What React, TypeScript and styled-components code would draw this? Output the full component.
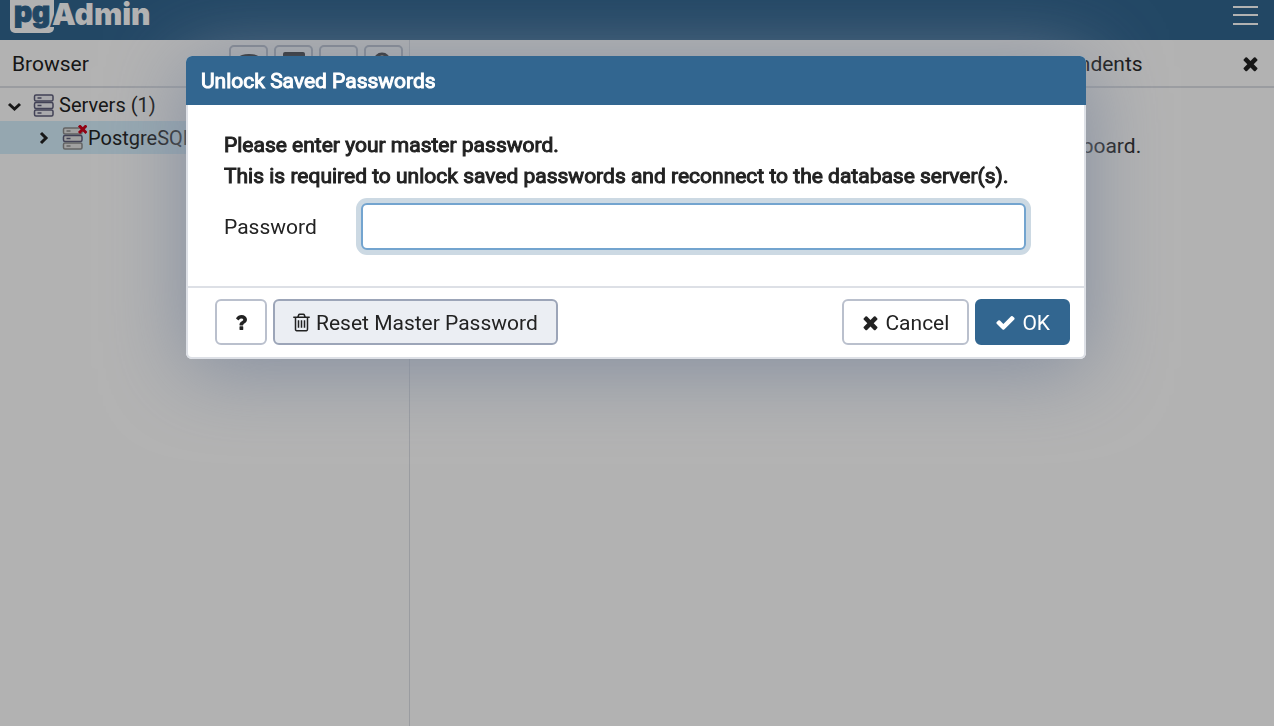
import React from "react";
import styled, { createGlobalStyle, css } from "styled-components";

const Global = createGlobalStyle`
  *, *::before, *::after { box-sizing: border-box; }
  html, body, #root { height: 100%; }
  body {
    margin: 0;
    overflow: hidden;
    background: #fff;
    color: #222;
    font: 400 21px/32px Roboto, "Liberation Sans", sans-serif;
  }
  button, input { font: inherit; color: inherit; }
`;

const Page = styled.div`
  display: flex;
  flex-direction: column;
  height: 100%;
`;

const NavBar = styled.header`
  display: flex;
  justify-content: space-between;
  align-items: flex-start;
  height: 40px;
  flex: none;
  padding: 0 15px 0 10px;
  background: #326690;
`;

const MenuButton = styled.button`
  display: flex;
  padding: 4px 0 0;
  border: 0;
  background: none;
  color: #fff;
`;

const Workspace = styled.div`
  display: flex;
  flex: 1;
  min-height: 0;
`;

const Sidebar = styled.aside`
  width: 410px;
  flex: none;
  border-right: 1px solid #dde0e6;
`;

const PanelHeader = styled.div`
  display: flex;
  align-items: center;
  height: 48px;
  padding: 2px 6px 0 12px;
  border-bottom: 2px solid #dde0e6;
`;

const PanelTitle = styled.span`
  flex: 1;
`;

const ToolGroup = styled.div`
  display: flex;
  gap: 6px;
`;

const ToolButton = styled.button`
  display: flex;
  align-items: center;
  justify-content: center;
  width: 39px;
  height: 38px;
  padding: 0;
  border: 2px solid #bac0cd;
  border-radius: 5px;
  background: #fff;
`;

const Tree = styled.ul`
  list-style: none;
  margin: 0;
  padding: 0;
  font-size: 20px;
`;

const TreeRow = styled.li<{ $level: number; $selected?: boolean }>`
  display: flex;
  align-items: center;
  height: 33px;
  padding-left: ${(p) => 6 + p.$level * 29}px;
  white-space: nowrap;
  background: ${(p) => (p.$selected ? "#d6effc" : "transparent")};
`;

const TreeIcon = styled.svg`
  flex: none;
  margin: 0 1px 0 11px;
`;

const Main = styled.main`
  flex: 1;
  min-width: 0;
`;

const TabBar = styled.nav`
  display: flex;
  align-items: center;
  gap: 29px;
  height: 48px;
  padding: 2px 15px 0 20px;
  border-bottom: 2px solid #dde0e6;
`;

const Tab = styled.a`
  color: inherit;
  text-decoration: none;
`;

const CloseButton = styled.button`
  display: flex;
  margin-left: auto;
  padding: 0 0 2px;
  border: 0;
  background: none;
`;

const EmptyMessage = styled.p`
  display: flex;
  align-items: center;
  justify-content: center;
  gap: 12px;
  margin: 42px 0 0;
`;

const Backdrop = styled.div`
  position: fixed;
  inset: 0;
  background: rgba(0, 0, 0, 0.3);
`;

const Dialog = styled.section`
  position: fixed;
  top: 56px;
  left: 186px;
  width: 900px;
  border-radius: 6px;
  background: #fff;
  box-shadow: 0 10px 80px #848ea0;
`;

const DialogHeader = styled.h1`
  margin: 0;
  padding: 9px 15px 8px;
  border-radius: 6px 6px 0 0;
  background: #326690;
  color: #fff;
  font-size: 21px;
  line-height: 32px;
  font-weight: 400;
  -webkit-text-stroke: 1px #fff;
`;

const DialogBody = styled.div`
  padding: 25px 58px 32px 36px;
  border: 2px solid #dde0e6;
  border-width: 0 2px 2px;
`;

const Prompt = styled.p`
  margin: 0;
  line-height: 31px;
  white-space: nowrap;
  -webkit-text-stroke: 1px #222;
`;

const Field = styled.div`
  display: grid;
  grid-template-columns: 137px 1fr;
  align-items: center;
  margin: 11px 0 4px;
`;

const PasswordInput = styled.input`
  width: 100%;
  height: 47px;
  padding: 0 12px;
  border: 2px solid #73a4cf;
  border-radius: 6px;
  outline: none;
  box-shadow: 0 0 0 5px #ccd9e3;
`;

const DialogFooter = styled.footer`
  display: flex;
  gap: 6px;
  padding: 11px 14px 12px 27px;
  border: 2px solid #dde0e6;
  border-width: 0 2px 2px;
  border-radius: 0 0 6px 6px;
`;

const Spacer = styled.div`
  flex: 1;
`;

const variants = {
  plain: css`
    border-color: #bac0cd;
    background: #fff;
  `,
  muted: css`
    border-color: #9ca5b8;
    background: #ebeef3;
  `,
  primary: css`
    border-color: #326690;
    background: #326690;
    color: #fff;
  `,
};

const Button = styled.button<{ $variant?: keyof typeof variants }>`
  display: flex;
  align-items: center;
  gap: 6px;
  height: 46px;
  padding: 0 18px;
  border: 2px solid;
  border-radius: 6px;
  white-space: nowrap;
  ${(p) => variants[p.$variant ?? "plain"]}
`;

const ButtonLabel = styled.span`
  padding-top: 2px;
`;

const ICONS = {
  times: {
    width: 17,
    box: "192 0 1408 1792",
    d: "M1490 1322q0 40-28 68l-136 136q-28 28-68 28t-68-28l-294-294-294 294q-28 28-68 28t-68-28l-136-136q-28-28-28-68t28-68l294-294-294-294q-28-28-28-68t28-68l136-136q28-28 68-28t68 28l294 294 294-294q28-28 68-28t68 28l136 136q28 28 28 68t-28 68l-294 294 294 294q28 28 28 68z",
  },
  check: {
    width: 21,
    box: "0 0 1792 1792",
    d: "M1671 566q0 40-28 68l-724 724-136 136q-28 28-68 28t-68-28l-136-136-362-362q-28-28-28-68t28-68l136-136q28-28 68-28t68 28l294 295 656-657q28-28 68-28t68 28l136 136q28 28 28 68z",
  },
  question: {
    width: 12,
    box: "384 0 1024 1792",
    d: "M1088 1256v240q0 16-12 28t-28 12h-240q-16 0-28-12t-12-28v-240q0-16 12-28t28-12h240q16 0 28 12t12 28zm316-600q0 54-15.5 101t-35 76.5-55 59.5-57.5 43.5-61 35.5q-41 23-68.5 65t-27.5 67q0 17-12 32.5t-28 15.5h-240q-15 0-25.5-18.5t-10.5-37.5v-45q0-83 65-156.5t143-108.5q59-27 84-56t25-76q0-42-46.5-74t-107.5-32q-65 0-108 29-35 25-107 115-13 16-31 16-12 0-25-8l-164-125q-13-10-15.5-25t5.5-28q160-266 464-266 80 0 161 31t146 83 106 127.5 41 158.5z",
  },
  trash: {
    width: 17,
    box: "192 0 1408 1792",
    d: "M704 736v576q0 14-9 23t-23 9h-64q-14 0-23-9t-9-23v-576q0-14 9-23t23-9h64q14 0 23 9t9 23zm256 0v576q0 14-9 23t-23 9h-64q-14 0-23-9t-9-23v-576q0-14 9-23t23-9h64q14 0 23 9t9 23zm256 0v576q0 14-9 23t-23 9h-64q-14 0-23-9t-9-23v-576q0-14 9-23t23-9h64q14 0 23 9t9 23zm128 724v-948h-896v948q0 22 7 40.5t14.5 27 10.5 8.5h832q3 0 10.5-8.5t14.5-27 7-40.5zm-672-1076h448l-48-117q-7-9-17-11h-317q-10 2-17 11zm928 32v64q0 14-9 23t-23 9h-96v948q0 83-47 143.5t-113 60.5h-832q-66 0-113-58.5t-47-141.5v-952h-96q-14 0-23-9t-9-23v-64q0-14 9-23t23-9h309l70-167q15-37 54-63t79-26h320q40 0 79 26t54 63l70 167h309q14 0 23 9t9 23z",
  },
};

const Icon = ({ name }: { name: keyof typeof ICONS }) => (
  <svg width={ICONS[name].width} height="21" viewBox={ICONS[name].box} fill="currentColor" aria-hidden="true">
    <path d={ICONS[name].d} />
  </svg>
);

const LogoArt = styled.svg`
  overflow: visible;

  text {
    font-family: Inter, sans-serif;
    font-weight: 900;
  }
`;

const Logo = () => (
  <LogoArt width="146" height="36" viewBox="0 0 146 36" role="img" aria-label="pgAdmin">
    <rect y="-8" width="44" height="41" rx="5" fill="#fff" />
    <text x="4" y="22" fontSize="28" fill="#326690" stroke="#326690">pg</text>
    <text x="42" y="25" fontSize="30" fill="#fff" stroke="#326690" strokeWidth="4" paintOrder="stroke">Admin</text>
  </LogoArt>
);

const Chevron = ({ open }: { open?: boolean }) => (
  <svg width="16" height="16" viewBox="0 0 16 16" fill="none" stroke="#222" strokeWidth="3" aria-hidden="true">
    <path d={open ? "M3 7L8.500 12L14 7" : "M6 3L11 8L6 13"} />
  </svg>
);

const ServerIcon = ({ offline }: { offline?: boolean }) => (
  <TreeIcon width="25" height="26" viewBox="0 0 25 26" fill="none" strokeWidth="1.500" aria-hidden="true">
    {[3, 10.5, 18].map((y, i) => (
      <g key={y} stroke={offline && i !== 1 ? "#8f8f8f" : "#5f5f7c"}>
        <rect x="1.500" y={y} width="18.500" height="6" rx="1.500" fill={offline ? "#e6e6e6" : "#f2f2f6"} />
        <path d="M4.500 3H8.500" transform={`translate(0 ${y})`} />
      </g>
    ))}
    {offline && <path d="M17 0.500L24.500 8M24.500 0.500L17 8" stroke="#d0021b" strokeWidth="3" />}
  </TreeIcon>
);

const tabs = ["Dashboard", "Properties", "SQL", "Statistics", "Dependencies", "Dependents"];

export default function App() {
  return (
    <>
      <Global />
      <Page>
        <NavBar>
          <Logo />
          <MenuButton aria-label="Menu">
            <svg width="27" height="24" viewBox="0 0 27 24" stroke="currentColor" strokeWidth="2">
              <path d="M1 3H26M1 11H26M1 20H26" />
            </svg>
          </MenuButton>
        </NavBar>
        <Workspace>
          <Sidebar>
            <PanelHeader>
              <PanelTitle>Browser</PanelTitle>
              <ToolGroup>
                <ToolButton aria-label="Query tool">
                  <svg width="20" height="22" viewBox="0 0 20 22" fill="#222"><ellipse cx="10" cy="4" rx="10" ry="3" /><path d="M1 6Q10 11 19 6V16Q10 21 1 16Z" /></svg>
                </ToolButton>
                <ToolButton aria-label="View data">
                  <svg width="22" height="24" viewBox="0 0 22 24" fill="#222"><rect width="22" height="22" rx="2" /></svg>
                </ToolButton>
                <ToolButton aria-label="Filtered rows" />
                <ToolButton aria-label="Search objects">
                  <svg width="20" height="24" viewBox="0 0 20 24" fill="none" stroke="#222" strokeWidth="3"><circle cx="8" cy="9" r="7" /><path d="M13 14L18 19" /></svg>
                </ToolButton>
              </ToolGroup>
            </PanelHeader>
            <Tree>
              <TreeRow $level={0}><Chevron open /><ServerIcon />Servers (1)</TreeRow>
              <TreeRow $level={1} $selected><Chevron /><ServerIcon offline />PostgreSQL 13</TreeRow>
            </Tree>
          </Sidebar>
          <Main>
            <TabBar>
              {tabs.map((t) => <Tab key={t} href="#">{t}</Tab>)}
              <CloseButton aria-label="Close panel"><Icon name="times" /></CloseButton>
            </TabBar>
            <EmptyMessage>
              <svg width="21" height="21" viewBox="0 0 21 21" aria-hidden="true">
                <circle cx="10" cy="10" r="9" fill="#222" />
                <path d="M10 4V12M10 14V17" stroke="#fff" strokeWidth="3" />
              </svg>
              Please connect to the selected server to view the dashboard.
            </EmptyMessage>
          </Main>
        </Workspace>
      </Page>
      <Backdrop />
      <Dialog role="dialog" aria-labelledby="dialog-title">
        <DialogHeader id="dialog-title">Unlock Saved Passwords</DialogHeader>
        <DialogBody>
          <Prompt>
            Please enter your master password.
            <br />
            This is required to unlock saved passwords and reconnect to the database server(s).
          </Prompt>
          <Field>
            <label htmlFor="password">Password</label>
            <PasswordInput id="password" type="password" />
          </Field>
        </DialogBody>
        <DialogFooter>
          <Button aria-label="Help"><Icon name="question" /></Button>
          <Button $variant="muted"><Icon name="trash" /><ButtonLabel>Reset Master Password</ButtonLabel></Button>
          <Spacer />
          <Button><Icon name="times" /><ButtonLabel>Cancel</ButtonLabel></Button>
          <Button $variant="primary"><Icon name="check" /><ButtonLabel>OK</ButtonLabel></Button>
        </DialogFooter>
      </Dialog>
    </>
  );
}
